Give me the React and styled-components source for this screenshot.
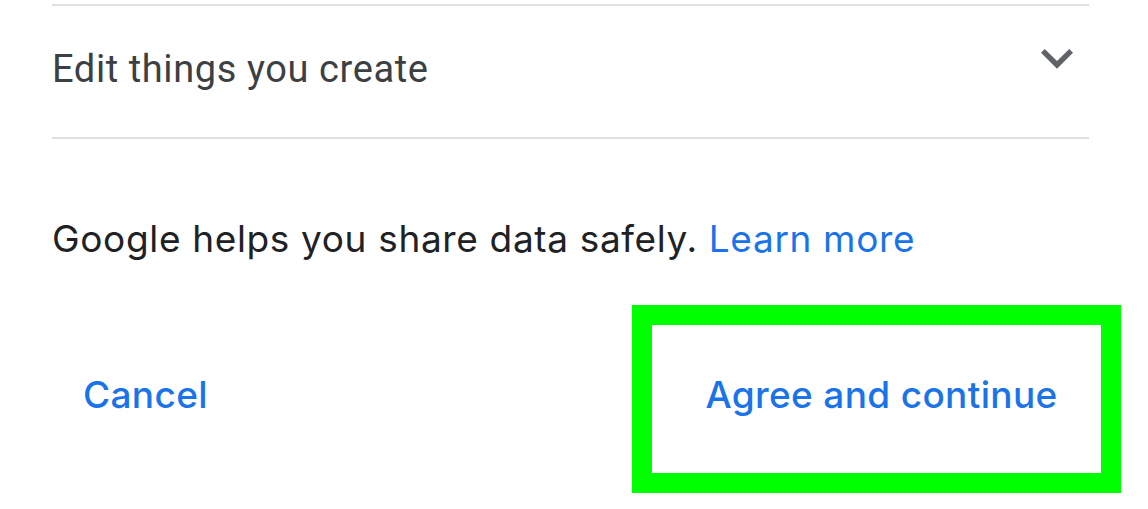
import React from "react";
import styled, { createGlobalStyle } from "styled-components";

const Global = createGlobalStyle`
  html, body { margin: 0; padding: 0; background: #ffffff; }
  body { font-family: Roboto, "Noto Sans", Arial, sans-serif; }
`;

const Page = styled.div`
  width: 1148px;
  height: 509px;
  overflow: hidden;
  background: #ffffff;
  padding-top: 4px;
  box-sizing: border-box;
`;

const Section = styled.div`
  margin: 0 59px 0 52px;
`;

const Divider = styled.div`
  height: 2px;
  background: #dfe0e2;
`;

const PermissionRow = styled.div`
  height: 131px;
  display: flex;
  justify-content: space-between;
  align-items: flex-start;
`;

const PermissionLabel = styled.div`
  margin-top: 41px;
  font-family: Roboto, Arial, sans-serif;
  font-size: 38px;
  line-height: 44px;
  color: #3c4043;
  letter-spacing: 0.6px;
`;

const ExpandIcon = styled.svg`
  width: 64px;
  height: 64px;
  margin-top: 20px;
  fill: #5f6368;
  flex-shrink: 0;
`;

const Note = styled.p`
  margin: 78px 0 0 0;
  font-family: Inter, Roboto, Arial, sans-serif;
  font-size: 37px;
  line-height: 44px;
  color: #202124;
  letter-spacing: 0.65px;
`;

const Link = styled.a`
  color: #1a73e8;
  text-decoration: none;
`;

const Footer = styled.div`
  margin-top: 44px;
  display: flex;
  justify-content: space-between;
  align-items: center;
  padding: 0 27px 0 52px;
`;

const TextButton = styled.button`
  background: #ffffff;
  border: ${(p) => (p.$highlight ? "20px solid #00ff00" : "none")};
  box-sizing: border-box;
  width: ${(p) => (p.$highlight ? "489px" : "auto")};
  height: 188px;
  padding: ${(p) => (p.$highlight ? "0 0 8px 10px" : "0 31px 8px 31px")};
  display: flex;
  align-items: center;
  justify-content: center;
  font-family: Inter, Roboto, Arial, sans-serif;
  font-weight: 500;
  font-size: 37px;
  line-height: 44px;
  letter-spacing: 0.35px;
  color: #1a73e8;
  cursor: pointer;
`;

export default function App() {
  return (
    <Page>
      <Global />
      <Section>
        <Divider />
        <PermissionRow>
          <PermissionLabel>Edit things you create</PermissionLabel>
          <ExpandIcon viewBox="0 0 24 24" aria-hidden="true">
            <path d="M16.59 8.59L12 13.17 7.41 8.59 6 10l6 6 6-6z" />
          </ExpandIcon>
        </PermissionRow>
        <Divider />
        <Note>
          Google helps you share data safely. <Link href="#">Learn more</Link>
        </Note>
      </Section>
      <Footer>
        <TextButton>Cancel</TextButton>
        <TextButton $highlight>Agree and continue</TextButton>
      </Footer>
    </Page>
  );
}
